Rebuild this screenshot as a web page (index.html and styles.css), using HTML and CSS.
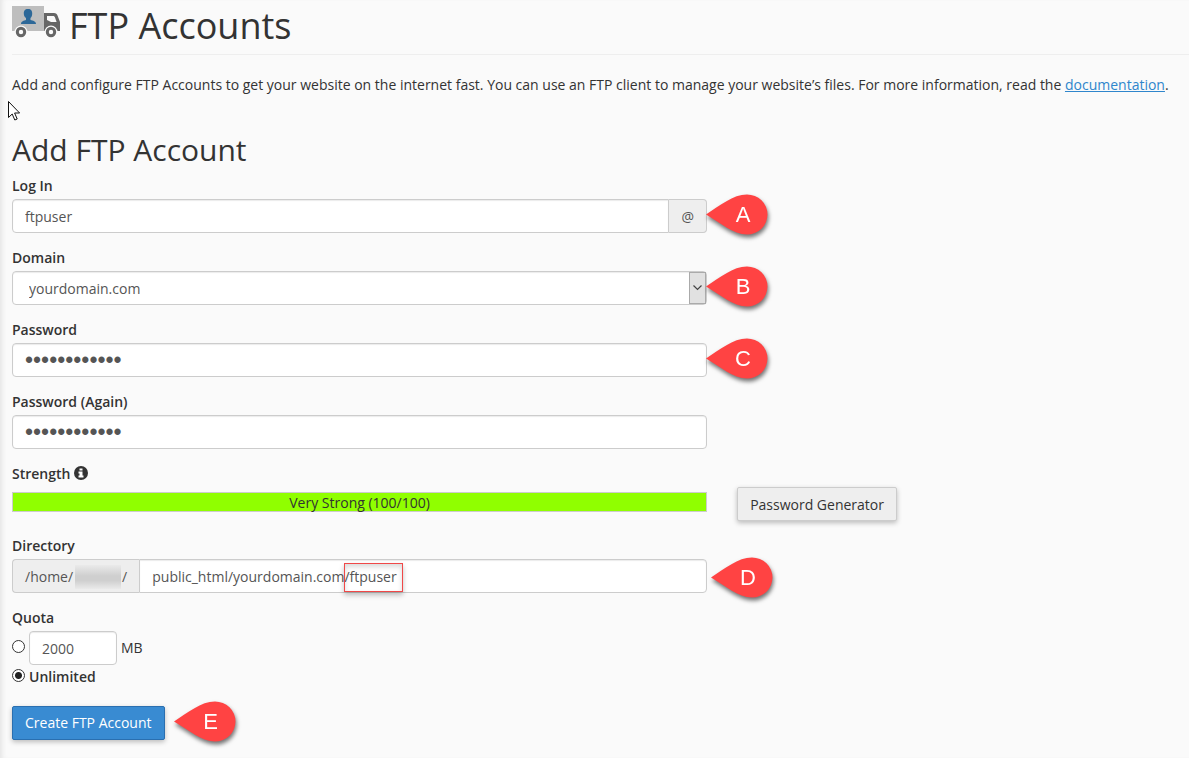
FILE: index.html
```html
<!DOCTYPE html>
<html lang="en">

<head>
  <meta charset="UTF-8">
  <meta name="viewport" content="width=device-width, initial-scale=1.0">
  <title>FTP Accounts</title>
  <link rel="stylesheet" href="styles.css">
</head>

<body>

  <!-- shared callout shape -->
  <svg class="defs" width="0" height="0" aria-hidden="true">
    <symbol id="pin" viewBox="0 0 64 42">
      <path d="M0 20.500C14 11.500 27 0.500 41 0.500a20.500 20 0 0 1 0 40C27 40.500 14 28.500 0 20.500z" fill="#ff4343"/>
    </symbol>
  </svg>

  <main class="page">
    <h1 class="page-title">
      <svg class="title-icon" width="48" height="34" viewBox="0 2 48 34" aria-hidden="true">
        <path d="M0 1h32v26H0z" fill="#bebebe"/>
        <path d="M32 9h10c2 0 3 1 3.500 2.500L48 18v9H32z" fill="#666"/>
        <path d="M35 12h6c1.200 0 1.500.5 2 1.500l1.600 4.500H39l-4-2z" fill="#fafafa"/>
        <path d="M16 5c3.200 0 4.200 2 4.200 4.500 0 2-.6 3.500-1.700 4.500v2c2.500.5 5.500 1.200 5.500 4H9c0-2.800 3-3.500 5-4v-2c-1.300-1-2.200-2.500-2.200-4.500C11.800 7 12.800 5 16 5z" fill="#2d6898"/>
        <circle cx="9" cy="28" r="6.500" fill="#fafafa"/>
        <circle cx="9" cy="28" r="3.700" fill="none" stroke="#666" stroke-width="3"/>
        <circle cx="39" cy="28" r="6.500" fill="#fafafa"/>
        <circle cx="39" cy="28" r="3.700" fill="none" stroke="#666" stroke-width="3"/>
      </svg>
      FTP Accounts
    </h1>

    <p class="intro">Add and configure FTP Accounts to get your website on the internet fast. You can use an FTP client to manage your website’s files. For more information, read the <a href="#">documentation</a>.</p>

    <h2 class="section-title">Add FTP Account</h2>

    <form class="ftp-form">
      <div class="form-group">
        <label for="login">Log In</label>
        <div class="control">
          <input class="text-input" type="text" id="login" value="ftpuser">
          <span class="addon addon-right">@</span>
          <span class="pin"><svg width="64" height="42"><use href="#pin"/></svg><b>A</b></span>
        </div>
      </div>

      <div class="form-group">
        <label for="domain">Domain</label>
        <div class="control">
          <select class="text-input select" id="domain">
            <option>yourdomain.com</option>
          </select>
          <span class="select-arrow"><svg width="9" height="6" viewBox="0 0 9 6"><path d="M.5.500l4 4 4-4" fill="none" stroke="#444" stroke-width="1.200"/></svg></span>
          <span class="pin"><svg width="64" height="42"><use href="#pin"/></svg><b>B</b></span>
        </div>
      </div>

      <div class="form-group">
        <label for="password">Password</label>
        <div class="control">
          <input class="text-input password" type="password" id="password" value="abcdefghijkl">
          <span class="pin"><svg width="64" height="42"><use href="#pin"/></svg><b>C</b></span>
        </div>
      </div>

      <div class="form-group">
        <label for="password2">Password (Again)</label>
        <div class="control">
          <input class="text-input password" type="password" id="password2" value="abcdefghijkl">
        </div>
      </div>

      <div class="form-group">
        <div class="label" id="strengthLabel">Strength
          <svg class="info-icon" width="14" height="14" viewBox="0 0 14 14" aria-hidden="true">
            <circle cx="7" cy="7" r="7" fill="#333"/>
            <path d="M5.500 2.500h3v2h-3zM4.500 5.500h4v4h1v2h-5v-2h1v-2h-1z" fill="#fff"/>
          </svg>
        </div>
        <div class="strength-row">
          <div class="strength-bar" aria-labelledby="strengthLabel">Very Strong (100/100)</div>
          <button class="btn" type="button">Password Generator</button>
        </div>
      </div>

      <div class="form-group">
        <label for="directory">Directory</label>
        <div class="control">
          <span class="addon addon-left">/home/<i class="redacted"></i>/</span>
          <input class="text-input" type="text" id="directory" value="public_html/yourdomain.com/ftpuser">
          <span class="highlight"></span>
          <span class="pin pin-spaced"><svg width="64" height="42"><use href="#pin"/></svg><b>D</b></span>
        </div>
      </div>

      <div class="form-group quota">
        <div class="label">Quota</div>
        <div class="quota-row">
          <input class="radio" type="radio" name="quota" id="limited" aria-label="Limited quota">
          <input class="text-input quota-input" type="text" id="quota" value="2000">
          <label class="unit" for="quota">MB</label>
        </div>
        <div class="unlimited-row">
          <input class="radio" type="radio" name="quota" id="unlimited" checked>
          <label for="unlimited">Unlimited</label>
        </div>
      </div>

      <div class="control submit">
        <button class="btn btn-primary" type="button">Create FTP Account</button>
        <span class="pin pin-submit"><svg width="64" height="42"><use href="#pin"/></svg><b>E</b></span>
      </div>
    </form>
  </main>

  <svg class="cursor" width="13" height="20" viewBox="0 0 13 20" aria-hidden="true">
    <path d="M.5.500v16l3.700-3.500 2.600 6 2.400-1-2.600-6h5z" fill="#fff" stroke="#111" stroke-width="1"/>
  </svg>

</body>

</html>
```
FILE: styles.css
```css
* {
  box-sizing: border-box;
}

body {
  margin: 0;
  min-height: 100vh;
  background-color: #fafafa;
  box-shadow: inset 5px 0 5px -3px #e4e4e4;
  color: #333;
  font-family: "Open Sans", sans-serif;
  font-size: 14px;
  line-height: 20px;
}

.defs {
  position: absolute;
}

.page {
  padding: 6px 0 18px 12px;
}

.page-title {
  display: flex;
  gap: 9px;
  margin: 0;
  padding-bottom: 8px;
  border-bottom: 1px solid #eee;
  font-size: 36px;
  font-weight: 400;
  line-height: 40px;
}

.intro {
  margin: 20px 0 0;
}

.intro a {
  color: #2f86cc;
}

.section-title {
  margin: 38px 0 9px;
  font-size: 30px;
  font-weight: 400;
  line-height: 34px;
}

.ftp-form {
  max-width: 695px;
}

.form-group {
  margin-bottom: 15px;
}

label,
.label {
  display: block;
  margin-bottom: 3px;
  font-weight: 600;
}

.control {
  position: relative;
  display: flex;
}

.text-input {
  flex: 1;
  min-width: 0;
  height: 34px;
  padding: 6px 12px;
  border: 1px solid #ccc;
  border-radius: 4px;
  background-color: #fff;
  box-shadow: inset 0 1px 1px rgba(0, 0, 0, 0.08);
  color: #555;
  font: inherit;
}

.password {
  font-family: "Liberation Sans", Arial, sans-serif;
  font-size: 23px;
}

.select {
  padding: 7px 12px 5px 16px;
  appearance: none;
}

.select-arrow {
  position: absolute;
  top: 1px;
  right: 1px;
  bottom: 1px;
  display: flex;
  align-items: center;
  justify-content: center;
  width: 17px;
  border: 1px solid #aaa;
  background-color: #e1e1e1;
  pointer-events: none;
}

.addon {
  display: flex;
  align-items: center;
  padding: 1px 12px 0;
  border: 1px solid #ccc;
  border-radius: 4px;
  background-color: #eee;
  color: #555;
}

.addon-right {
  border-left: 0;
  border-radius: 0 4px 4px 0;
}

.addon-left {
  border-right: 0;
  border-radius: 4px 0 0 4px;
}

.text-input:has(+ .addon-right) {
  border-radius: 4px 0 0 4px;
}

.addon-left + .text-input {
  border-radius: 0 4px 4px 0;
}

.redacted {
  width: 46px;
  height: 24px;
  margin: 0 1px 0 2px;
  background: linear-gradient(#eaeaea, #cfcfcf 45%, #cfcfcf 65%, #eaeaea);
}

.highlight {
  position: absolute;
  top: 4px;
  left: 332px;
  width: 59px;
  height: 29px;
  border: 1px solid #f04848;
  box-shadow: 0 3px 5px rgba(0, 0, 0, 0.25), inset 0 3px 5px rgba(0, 0, 0, 0.15);
}

/* lettered callouts */
.pin {
  position: absolute;
  top: -5px;
  left: calc(100% - 1px);
  width: 64px;
  height: 42px;
  filter: drop-shadow(1px 3px 2px rgba(0, 0, 0, 0.55));
}

.pin b {
  position: absolute;
  top: 0;
  left: 0;
  width: 74px;
  color: #fff;
  font: 22px/42px "Liberation Sans", Arial, sans-serif;
  text-align: center;
}

.pin-spaced {
  top: -2px;
  margin-left: 5px;
}

.strength-row {
  display: flex;
  align-items: flex-start;
  gap: 30px;
  margin-right: -190px;
}

.strength-bar {
  flex: 1;
  height: 20px;
  margin-top: 5px;
  border: 1px solid #ccc;
  background-color: #90ff00;
  text-align: center;
}

.info-icon {
  vertical-align: -1px;
}

.btn {
  height: 34px;
  padding: 1px 12px 0;
  border: 1px solid #ccc;
  border-radius: 2px;
  background-color: #eee;
  box-shadow: 0 2px 5px rgba(0, 0, 0, 0.25);
  color: #333;
  font: inherit;
}

.btn-primary {
  padding-top: 0;
  border-color: #2a6fb0;
  background-color: #398bd2;
  color: #fff;
}

.quota-row,
.unlimited-row {
  display: flex;
  align-items: center;
  gap: 4px;
}

.radio {
  width: 13px;
  height: 13px;
  margin: 0 0 3px;
  border: 1px solid #333;
  border-radius: 50%;
  background-color: #fff;
  appearance: none;
}

.radio:checked {
  background: radial-gradient(#222 3px, #fff 4px);
}

.quota-input {
  flex: none;
  width: 88px;
}

.unit {
  margin: 0;
  font-weight: 400;
}

.unlimited-row {
  margin-top: 2px;
}

.unlimited-row label {
  margin: 0;
}

.submit {
  width: fit-content;
  margin-top: 19px;
}

.pin-submit {
  margin-left: 10px;
}

.cursor {
  position: absolute;
  top: 101px;
  left: 8px;
}
```
